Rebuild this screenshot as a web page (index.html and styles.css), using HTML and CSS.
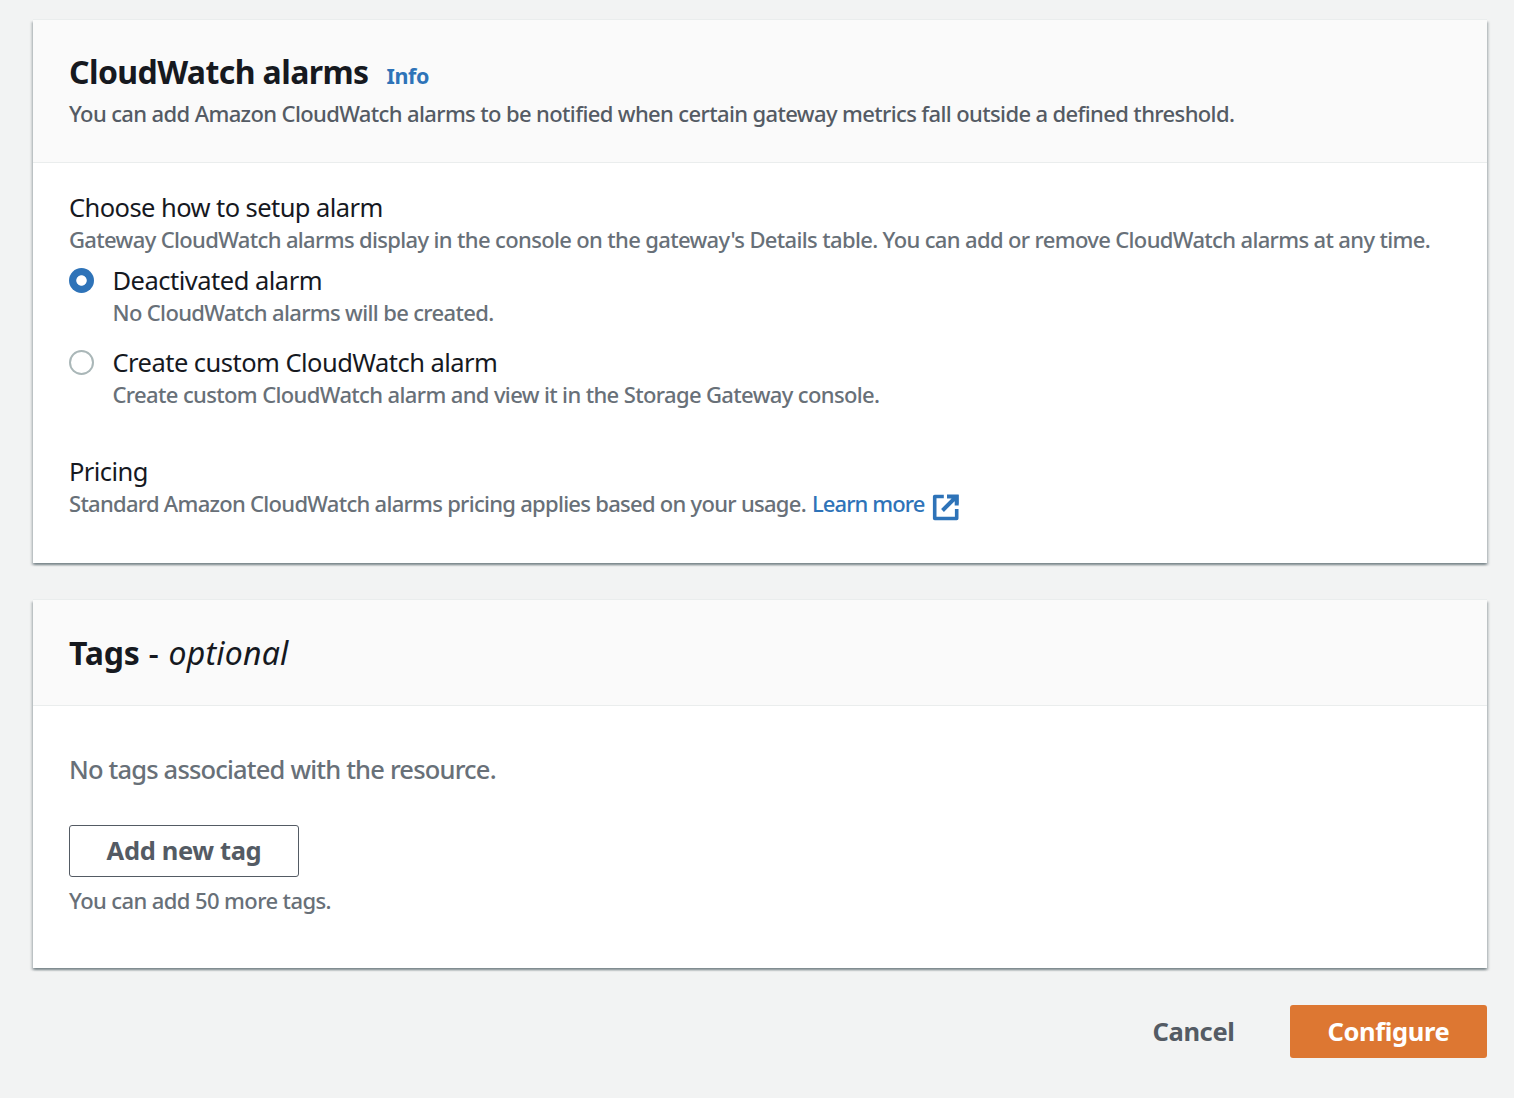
FILE: index.html
```html
<!DOCTYPE html>
<html lang="en">
<head>
<meta charset="utf-8">
<title>Configure gateway</title>
<link rel="stylesheet" href="styles.css">
</head>
<body>
<main class="page">
  <section class="card">
    <header class="card-header">
      <h2 class="title"><span class="title-main">CloudWatch alarms</span><a class="info">Info</a></h2>
      <p class="description">You can add Amazon CloudWatch alarms to be notified when certain gateway metrics fall outside a defined threshold.</p>
    </header>
    <div class="card-body">
      <div class="field">
        <div class="label">Choose how to setup alarm</div>
        <div class="hint hint-long">Gateway CloudWatch alarms display in the console on the gateway's Details table. You can add or remove CloudWatch alarms at any time.</div>
      </div>
      <div class="option">
        <span class="radio radio-checked"></span>
        <div>
          <div class="label label-deactivated">Deactivated alarm</div>
          <div class="hint hint-none">No CloudWatch alarms will be created.</div>
        </div>
      </div>
      <div class="option option-custom">
        <span class="radio"></span>
        <div>
          <div class="label label-custom">Create custom CloudWatch alarm</div>
          <div class="hint hint-custom">Create custom CloudWatch alarm and view it in the Storage Gateway console.</div>
        </div>
      </div>
      <div class="pricing">
        <div class="label label-pricing">Pricing</div>
        <div class="hint pricing-line">
          <span class="pricing-text">Standard Amazon CloudWatch alarms pricing applies based on your usage.</span>
          <a class="learn">Learn more</a>
          <svg class="external" viewBox="0 0 27 27" fill="none" stroke="currentColor" stroke-width="3.6">
            <path d="M11.800 2.500H2.700v22h22v-9.500" stroke-linejoin="round"/>
            <path d="M15 2.500h9.700V11.500M24 3L10.500 16.500" stroke-width="4"/>
            <path d="M17.500 1h9v9z" fill="currentColor" stroke="none"/>
          </svg>
        </div>
      </div>
    </div>
  </section>

  <section class="card card-tags">
    <header class="card-header tags-header">
      <h2 class="title"><span class="title-tags">Tags</span><span class="optional"><span class="dash">-</span><i>optional</i></span></h2>
    </header>
    <div class="card-body tags-body">
      <div class="empty">No tags associated with the resource.</div>
      <button class="button button-add">Add new tag</button>
      <div class="hint hint-limit">You can add 50 more tags.</div>
    </div>
  </section>

  <footer class="actions">
    <button class="button button-link">Cancel</button>
    <button class="button button-primary">Configure</button>
  </footer>
</main>
</body>
</html>
```

FILE: styles.css
```css
* { box-sizing: border-box; }

body {
  margin: 0;
  background: #f2f3f3;
  color: #16191f;
  font-family: "Noto Sans", "Open Sans", sans-serif;
  font-size: 25.500px;
  line-height: 32px;
}

.page { padding: 20px 27px 40px 33px; }

.card {
  background: #fff;
  box-shadow: 0 2px 2px 0 rgba(0, 28, 36, .3), 2px 2px 2px 0 rgba(0, 28, 36, .15), -2px 2px 2px 0 rgba(0, 28, 36, .15), 0 -1px 0 0 #eaeded;
}

.card-tags { margin-top: 37px; }

.card-header {
  height: 143px;
  padding: 32px 36px 0;
  background: #fafafa;
  border-bottom: 1px solid #eaeded;
}

.tags-header { height: 106px; padding-top: 33px; }

.title {
  display: flex;
  align-items: baseline;
  margin: 0;
  font-size: 32px;
  line-height: 40px;
  font-weight: 700;
  white-space: nowrap;
}

.title-main { width: 317.500px; letter-spacing: -.59px; }
.info { font-size: 21.500px; color: #2e73b8; letter-spacing: -.4px; }
.title-tags { letter-spacing: -.2px; }

.description {
  margin: 1px 0 0;
  font-size: 22px;
  font-weight: 500;
  color: #545b64;
  letter-spacing: -.628px;
  white-space: nowrap;
}

.card-body { height: 400px; padding: 28px 36px 0; }

.label, .hint, .empty { white-space: nowrap; }
.label { font-weight: 450; letter-spacing: -.57px; }
.label-deactivated { letter-spacing: -.5px; }
.label-custom { letter-spacing: -.53px; }
.hint { font-size: 22px; font-weight: 500; color: #687078; letter-spacing: -.65px; }
.hint-custom { letter-spacing: -.635px; }

.option { display: flex; gap: 18.500px; margin-top: 9px; }
.option-custom { margin-top: 18px; }

.radio {
  width: 25px;
  height: 25px;
  margin-top: 4px;
  border-radius: 50%;
  background: #fff;
  box-shadow: inset 0 0 0 2px #aab7b8;
}

.radio-checked {
  background: radial-gradient(circle, #fff 4.800px, #2e73b8 5.600px);
  box-shadow: none;
}

.pricing { margin-top: 45px; }
.pricing-line { display: flex; }
.pricing-text { width: 743px; letter-spacing: -.72px; }
.learn { width: 120px; color: #2e73b8; letter-spacing: -.92px; }
.external { width: 27px; height: 27px; margin-top: 7px; color: #2e73b8; }

.optional { display: flex; margin-left: 9px; font-weight: 400; letter-spacing: .2px; }
.dash { width: 20px; font-weight: 500; }

.tags-body { height: 262px; padding-top: 47px; }
.empty { color: #687078; font-weight: 500; letter-spacing: -.82px; }

.button {
  height: 52px;
  padding: 0 0 2px;
  border: 1px solid transparent;
  border-radius: 3px;
  background: transparent;
  color: #545b64;
  font: 700 25.500px/32px "Noto Sans", "Open Sans", sans-serif;
  letter-spacing: -.36px;
  white-space: nowrap;
}

.button-add {
  display: block;
  width: 230px;
  margin: 40px 0 7px;
  border-color: #545b64;
  background: #fff;
}

.hint-limit { letter-spacing: -.6px; }

.actions { display: flex; justify-content: flex-end; gap: 18px; margin-top: 37px; }
.actions .button { height: 53px; }
.button-link { width: 157px; }
.button-primary { width: 197px; background: #dd7732; color: #fff; }
```
